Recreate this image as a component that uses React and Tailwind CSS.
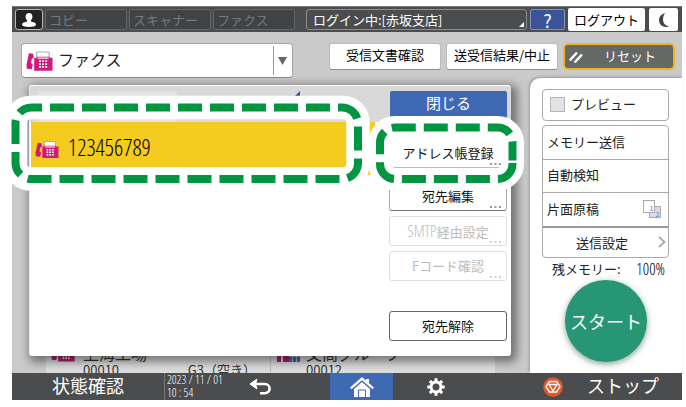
import React from "react";

function FaxIcon({ className, fill = "#d3187c" }) {
  return (
    <svg viewBox="0 0 28 20" className={className} aria-hidden="true">
      <path d="M3 2l4.500.5.5 4-2 1.500-.8 4 1.800 1.500L6 18.500l-5-.5-.5-4z" fill={fill} />
      <path d="M11 7V.7h13V7" fill="#fff" stroke="#999" strokeWidth=".9" />
      <path d="M8.500 6.500h3v-1h13v1h3V20h-19z" fill={fill} />
      <path d="M12 7h11.500" stroke="#fff" strokeWidth="1.200" />
      <path d="M13.500 10.200h9M13.500 13.200h9M13.500 16.200h9" stroke="#fff" strokeWidth="1.800" strokeDasharray="2 1.200" />
    </svg>
  );
}

function PersonIcon() {
  return (
    <svg viewBox="0 0 14 14" className="size-[14px]" fill="#fff" aria-hidden="true">
      <ellipse cx="7" cy="3.800" rx="3.400" ry="3.800" />
      <path d="M5 6.500h4v2l4 1.200q1 .6 1 2.400Q13 14 7 14T0 12.100Q0 10.300 1 9.700l4-1.200z" />
    </svg>
  );
}

function Dots({ light }) {
  return (
    <svg viewBox="0 0 11 2" className="absolute right-[5px] bottom-[2px] h-[2px] w-[11px]" fill={light ? "#d4d4d4" : "#999"} aria-hidden="true">
      <rect width="2" height="2" />
      <rect x="4.500" width="2" height="2" />
      <rect x="9" width="2" height="2" />
    </svg>
  );
}

function AppTab({ children }) {
  return (
    <button type="button" className="h-[21px] w-[82px] rounded-[3px] border border-[#646668] bg-[#404244] px-[3px] text-left text-[#77797b]">
      {children}
    </button>
  );
}

function TopBar() {
  return (
    <header className="flex h-[26px] items-center border-t border-[#77797a] bg-[#4a4c4e] pl-[3px] text-[13px] leading-[18px]">
      <button type="button" aria-label="ユーザー" className="flex h-[21px] w-[28px] items-center justify-center rounded-[3px] border border-[#b8b8b8] bg-[#222]">
        <PersonIcon />
      </button>
      <nav className="ml-[2px] flex gap-[2px]">
        <AppTab>コピー</AppTab>
        <AppTab>スキャナー</AppTab>
        <AppTab>ファクス</AppTab>
      </nav>
      <button type="button" className="relative ml-[11px] h-[21px] flex-1 rounded-[3px] border border-[#8c8e90] px-[6px] text-left text-white">
        ログイン中:[赤坂支店]
        <svg viewBox="0 0 5 5" className="absolute right-[2px] bottom-[2px] size-[5px]" fill="#fff" aria-hidden="true">
          <path d="M5 0v5H0z" />
        </svg>
      </button>
      <button type="button" aria-label="ヘルプ" className="ml-[3px] h-[21px] w-[35px] rounded-[2px] border border-[#8492bb] bg-[#3a5499] text-[18px] text-white">
        ?
      </button>
      <button type="button" className="ml-[3px] h-[23px] w-[77px] rounded-[2px] bg-white text-black">
        ログアウト
      </button>
      <button type="button" aria-label="省エネ" className="mr-[4px] ml-[4px] flex h-[23px] w-[29px] items-center justify-center rounded-[2px] bg-white">
        <svg viewBox="0 0 10 14" className="h-[14px] w-[10px]" fill="#444" aria-hidden="true">
          <path d="M6 0Q0 2 0 7q0 6 6.500 7 2 .2 3.500-.5Q4 12 4 6.500 4 2.500 6 0z" />
        </svg>
      </button>
    </header>
  );
}

function Toolbar() {
  return (
    <div className="flex items-start pr-[7px] pl-[9px] text-[13px] leading-[18px]">
      <label className="relative flex h-[35px] w-[272px] items-center rounded-[4px] border border-[#a8a8a8] border-b-[#888] bg-white">
        <FaxIcon className="absolute top-[7px] left-[4px] h-[20px] w-[27px]" />
        <select aria-label="機能" className="h-full w-full appearance-none bg-transparent pr-5 pb-[4px] pl-[36px] text-[16px] text-[#222] outline-none">
          <option>ファクス</option>
        </select>
        <span className="absolute top-[2px] right-[18px] h-[29px] border-l border-[#999]" />
        <svg viewBox="0 0 9 8" className="absolute top-[13px] right-[5px] h-[8px] w-[9px]" fill="#666" aria-hidden="true">
          <path d="M0 0h9L4.500 8z" />
        </svg>
      </label>
      <div className="ml-auto flex gap-[5px]">
        <button type="button" className="h-[27px] w-[112px] rounded-[3px] border border-[#bbb] border-b-[#8c8c8c] bg-white pb-[3px] text-black">
          受信文書確認
        </button>
        <button type="button" className="h-[27px] w-[112px] rounded-[3px] border border-[#bbb] border-b-[#8c8c8c] bg-white pb-[3px] text-center whitespace-nowrap text-black">
          送受信結果/中止
        </button>
        <button type="button" className="flex h-[27px] w-[112px] items-center rounded-[5px] border-2 border-[#efb41c] bg-[#666866] pl-[4px] text-white">
          <svg viewBox="0 0 14 12" className="h-[12px] w-[14px]" stroke="#fff" strokeWidth="2.500" aria-hidden="true">
            <path d="M.8 9.500L8 1.500M5.500 11.500L13 3.500" />
          </svg>
          <span className="ml-[21px] pb-[2px]">リセット</span>
        </button>
      </div>
    </div>
  );
}

function ActionButton({ children, disabled }) {
  return (
    <button
      type="button"
      disabled={disabled}
      className={
        "relative h-[30px] w-full rounded-[3px] border bg-white " +
        (disabled ? "border-[#dedede] text-[#bcbcbc]" : "border-[#aaa] border-b-[#777] text-[#111]")
      }
    >
      {children}
      <Dots light={disabled} />
    </button>
  );
}

function Callouts() {
  return (
    <svg viewBox="0 0 686 407" className="pointer-events-none absolute top-[-86px] left-[-30px] h-[407px] w-[686px] max-w-none" fill="none" aria-hidden="true">
      <rect x="15.500" y="107.500" width="342.500" height="71.500" rx="15" stroke="#fff" strokeWidth="23.500" />
      <rect x="380" y="127.500" width="132.500" height="51.500" rx="15" stroke="#fff" strokeWidth="23" />
      <path
        d="M50 107.500H342a16 16 0 0 1 16 16V163a16 16 0 0 1-16 16H31.500a16 16 0 0 1-16-16V123.500a16 16 0 0 1 16-16z"
        pathLength="800"
        stroke="#009541"
        strokeWidth="8"
        strokeDasharray="24 8"
      />
      <path
        d="M512.500 163V164a15 15 0 0 1-15 15H395a15 15 0 0 1-15-15V142.500a15 15 0 0 1 15-15H497.500a15 15 0 0 1 15 15V160.500"
        stroke="#009541"
        strokeWidth="8"
        strokeDasharray="24 8"
      />
    </svg>
  );
}

function DestinationDialog() {
  return (
    <section role="dialog" aria-label="宛先" className="relative z-10 col-start-1 row-start-1 mt-[7px] mr-[19px] ml-[17px] self-start rounded-[3px] border-t border-l border-t-white border-l-[#eee] bg-white shadow-[3px_3px_10px_3px_rgba(0,0,0,0.45)]">
      <div className="flex h-[36px] items-start bg-[#d9d9d9] pt-[5px] pr-[4px] pl-[7px]">
        <div className="h-[31px] w-[140px] rounded-t-[3px] bg-[#e3e3e3]" />
        <svg viewBox="0 0 6 10" className="ml-[117px] h-[10px] w-[6px]" fill="#34549c" aria-hidden="true">
          <path d="M6 0v10H0V6z" />
        </svg>
        <button type="button" className="ml-auto h-[27px] w-[117px] rounded-[2px] bg-[#4069b4] pb-[2px] text-[15px] text-white">
          閉じる
        </button>
      </div>
      <div className="flex text-[13px] leading-[18px]">
        <div className="flex-1 pl-px">
          <div className="flex h-[53px] items-center bg-[#f4cc20] pl-[4px]">
            <FaxIcon className="mt-[2px] h-[17px] w-[24px]" />
            <span className="ml-[9px] pb-[3px] font-['Open_Sans_Condensed_Light','Noto_Sans_CJK_JP',sans-serif] text-[23px] leading-[26px] text-black">
              123456789
            </span>
          </div>
        </div>
        <div className="ml-[14px] w-[122px] pt-[16px] pr-[4px] pb-[15px]">
          <ActionButton>アドレス帳登録</ActionButton>
          <div className="mt-[13px] flex flex-col gap-[5px]">
            <ActionButton>宛先編集</ActionButton>
            <ActionButton disabled>
              <span className="font-['Open_Sans_Condensed_Light','Noto_Sans_CJK_JP',sans-serif] text-[16px]">SMTP</span>
              経由設定
            </ActionButton>
            <ActionButton disabled>Fコード確認</ActionButton>
          </div>
          <button type="button" className="mt-[30px] h-[30px] w-full rounded-[3px] border border-[#666] bg-white text-[#111]">
            宛先解除
          </button>
        </div>
      </div>
      <Callouts />
    </section>
  );
}

function AddressList() {
  return (
    <ul className="col-start-1 row-start-1 mr-[35px] ml-[34px] flex h-[34px] self-end overflow-hidden bg-[#dcdcdc] pt-[5px] text-[#333]">
      <li className="flex flex-1 gap-[8px] pl-[5px]">
        <FaxIcon className="h-[18px] w-[24px]" fill="#b0206c" />
        <div className="flex-1">
          <div className="h-[18px] text-[16px] leading-[18px]">上海工場</div>
          <div className="flex justify-between text-[13px] leading-[15px]">
            <span>00010</span>
            <span className="pr-[14px]">G3（空き）</span>
          </div>
        </div>
      </li>
      <li className="flex flex-1 gap-[6px] border-l border-[#bbb] pl-[5px]">
        <svg viewBox="0 0 24 18" className="h-[18px] w-[24px]" aria-hidden="true">
          <path d="M1 4h4v14H1zM7 8h8v10H7z" fill="#b0206c" />
          <path d="M13 8h11v10H13z" fill="#4069b4" />
          <path d="M13 12.500h11M16.500 8v10M20.500 8v10" stroke="#ccd" strokeWidth=".8" />
        </svg>
        <div>
          <div className="h-[18px] text-[16px] leading-[18px]">文商グループ</div>
          <div className="text-[13px] leading-[15px]">00012</div>
        </div>
      </li>
    </ul>
  );
}

function SidePanel() {
  return (
    <aside className="w-[152px] rounded-tl-[10px] bg-white px-[12px] pt-[11px] text-[13px] leading-[18px] text-[#222] shadow-[-1px_-1px_3px_rgba(0,0,0,0.25)]">
      <label className="flex h-[32px] w-[127px] items-center gap-[6px] rounded-[4px] border border-[#aaa] px-[7px] pb-[2px]">
        <input type="checkbox" className="size-[15px] appearance-none border border-[#b5b5b5] bg-[#e3e3e3]" />
        プレビュー
      </label>
      <div className="mt-[4px] w-[127px] rounded-[4px] border border-[#aaa]">
        <button type="button" className="block h-[33px] w-full px-[4px] pb-[2px] text-left">メモリー送信</button>
        <button type="button" className="block h-[33px] w-full border-t border-[#aaa] px-[4px] pb-[2px] text-left">自動検知</button>
        <button type="button" className="flex h-[34px] w-full items-center justify-between border-t border-[#aaa] pr-[7px] pb-[2px] pl-[4px] text-left">
          片面原稿
          <svg viewBox="0 0 18 18" className="size-[18px]" aria-hidden="true">
            <rect x="6.500" y="6.500" width="11" height="11" fill="#ddd" stroke="#aaa" />
            <rect x=".5" y=".5" width="11" height="12" fill="#fff" stroke="#aaa" />
            <text x="6.500" y="10.500" fontSize="7" fill="#4c7bd0">1</text>
            <text x="12.500" y="16.500" fontSize="7" fill="#4c7bd0">2</text>
          </svg>
        </button>
        <button type="button" className="relative block h-[31px] w-full border-t-2 border-[#999] pr-[7px] text-center">
          送信設定
          <svg viewBox="0 0 8 12" className="absolute top-[8px] right-[2px] h-[12px] w-[8px]" fill="none" stroke="#aaa" strokeWidth="1.800" aria-hidden="true">
            <path d="M1 1l5.500 5L1 11" />
          </svg>
        </button>
      </div>
      <div className="mt-[2px] flex w-[127px] justify-between pr-[4px] pl-[10px]">
        <span>残メモリー:</span>
        <span className="font-['Open_Sans_Condensed_Light','Noto_Sans_CJK_JP',sans-serif] text-[16px] text-black">100%</span>
      </div>
      <button type="button" className="mt-[2px] ml-[23px] block size-[82px] rounded-full bg-[#279674] text-[18px] text-white shadow-[0_2px_6px_rgba(0,70,40,0.5)]">
        スタート
      </button>
    </aside>
  );
}

function BottomBar() {
  return (
    <footer className="flex h-[27px] items-center bg-[#4a4c4e] text-[18px] leading-[26px] text-white">
      <button type="button" className="w-[152px] pb-[4px] text-center">状態確認</button>
      <time className="h-full w-[75px] border-l border-[#777] pl-[2px] font-['Open_Sans_Condensed_Light','Noto_Sans_CJK_JP',sans-serif] text-[12px] leading-[13px]">
        2023 / 11 / 01
        <br />
        10 : 54
      </time>
      <button type="button" aria-label="戻る" className="flex w-[91px] justify-start pl-[10px]">
        <svg viewBox="0 0 22 16" className="h-[16px] w-[22px]" fill="none" stroke="#fff" strokeWidth="2.600" aria-hidden="true">
          <path d="M7 5h9a4.600 4.600 0 0 1 0 9.200h-5" />
          <path d="M8 0L1 5l7 5-1.500-5z" fill="#fff" strokeWidth="1" />
        </svg>
      </button>
      <button type="button" aria-label="ホーム" className="flex h-[27px] w-[63px] items-center justify-center bg-[#4069b4]">
        <svg viewBox="0 0 24 20" className="mr-[24px] ml-[24px] h-[20px] w-[24px] shrink-0" aria-hidden="true">
          <path d="M12 0l4 3.500V2h3v4.200l5 4.400-1.500 1.600L12 3.200 1.500 12.200 0 10.600z" fill="#fff" />
          <path d="M12 5l8 7v8H4v-8z" fill="#fff" />
          <path d="M8.500 20v-7h7v7" fill="none" stroke="#4069b4" />
        </svg>
      </button>
      <button type="button" aria-label="設定" className="flex w-[86px] justify-center">
        <svg viewBox="0 0 18 18" className="size-[18px]" fill="none" stroke="#fff" aria-hidden="true">
          <circle cx="9" cy="9" r="5" strokeWidth="3" />
          <path d="M9 .3v3M9 14.700v3M.3 9h3M14.700 9h3M2.850 2.850l2.100 2.100M13.050 13.050l2.100 2.100M2.850 15.150l2.100-2.100M13.050 4.950l2.100-2.100" strokeWidth="3" />
        </svg>
      </button>
      <button type="button" className="mr-[23px] ml-auto flex items-center gap-[24px]">
        <svg viewBox="0 0 20 20" className="size-[20px]" fill="none" stroke="#fff" strokeLinejoin="round" aria-hidden="true">
          <circle cx="10" cy="10" r="9.800" fill="#e5552a" stroke="none" />
          <path d="M6.500 4.500h7L17 9.500l-3.500 5.500h-7L3 9.500z" strokeWidth="1.400" />
          <path d="M6 7.500h8L10 14z" strokeWidth="1.400" />
        </svg>
        <span className="pb-[4px]">ストップ</span>
      </button>
    </footer>
  );
}

export default function App() {
  return (
    <div className="flex min-h-screen flex-col bg-white pt-[6px] pr-[4px] pb-[7px] pl-[12px] font-['Noto_Sans_CJK_JP',sans-serif]">
      <TopBar />
      <main className="flex flex-1 flex-col bg-[#cacaca] pt-[11px]">
        <Toolbar />
        <div className="flex flex-1">
          <div className="grid flex-1">
            <AddressList />
            <DestinationDialog />
          </div>
          <SidePanel />
        </div>
      </main>
      <BottomBar />
    </div>
  );
}
